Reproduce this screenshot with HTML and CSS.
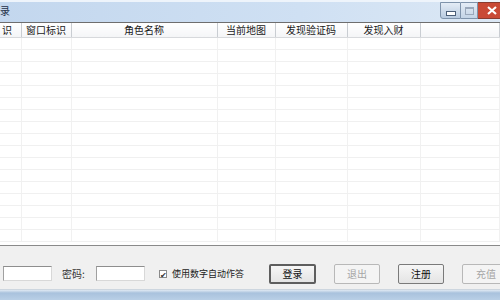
FILE: index.html
```html
<!DOCTYPE html>
<html lang="zh-CN">
<head>
    <meta charset="UTF-8">
    <title>登录</title>
    <link rel="stylesheet" href="styles.css">
</head>
<body>
    <div class="window">
        <div class="titlebar">
            <span class="title">录</span>
            <div class="caption-buttons">
                <span class="cap-btn cap-min"><i></i></span>
                <span class="cap-btn cap-max"><i></i></span>
                <span class="cap-btn cap-close">
                    <svg width="10" height="9" viewBox="0 0 10 9"><path d="M1 1 L9 8 M9 1 L1 8" stroke="#fff" stroke-width="2.2" fill="none"/></svg>
                </span>
            </div>
        </div>

        <div class="list">
            <table class="grid">
                <colgroup>
                    <col class="c-id">
                    <col class="c-win">
                    <col class="c-name">
                    <col class="c-map">
                    <col class="c-code">
                    <col class="c-money">
                    <col>
                </colgroup>
                <thead>
                    <tr>
                        <th class="th-id">识</th>
                        <th>窗口标识</th>
                        <th>角色名称</th>
                        <th>当前地图</th>
                        <th>发现验证码</th>
                        <th>发现入财</th>
                        <th></th>
                    </tr>
                </thead>
                <tbody id="rows">
                    <!-- empty rows are added below -->
                </tbody>
            </table>
        </div>

        <div class="panel">
            <input type="text" class="field">
            <label class="label">密码:</label>
            <input type="password" class="field">
            <label class="check"><span class="box">✔</span>使用数字自动作答</label>
            <button class="btn btn-default">登录</button>
            <button class="btn" disabled>退出</button>
            <button class="btn">注册</button>
            <button class="btn btn-last" disabled>充值</button>
        </div>

        <div class="frame-bottom"></div>
    </div>

    <script>
        const rows = document.getElementById('rows');
        for (let i = 0; i < 17; i++) {
            const tr = document.createElement('tr');
            tr.innerHTML = '<td></td><td></td><td></td><td></td><td></td><td></td><td></td>';
            rows.appendChild(tr);
        }
    </script>
</body>
</html>
```

FILE: styles.css
```css
body {
    margin: 0;
    padding: 0;
    font-family: "Noto Sans CJK SC", "Liberation Sans", sans-serif;
    font-size: 10px;
    color: #222;
    background-color: #fff;
}
.window {
    width: 500px;
    height: 300px;
    overflow: hidden;
    display: flex;
    flex-direction: column;
    background-color: #f0f0f0;
}
.titlebar {
    width: 500px;
    height: 22px;
    flex: none;
    display: flex;
    align-items: flex-start;
    background: linear-gradient(to right, #c3d7ee, #cfe0f3 60%, #dce8f5);
    border-top: 2px solid #eef4fb;
    box-sizing: border-box;
}
.title {
    flex: 1;
    margin-top: 3px;
    font-size: 10px;
    line-height: 12px;
    color: #1e3048;
}
.caption-buttons {
    flex: none;
    display: flex;
}
.cap-btn {
    flex: none;
    height: 17px;
    box-sizing: border-box;
    border: 1px solid #7f93ab;
    display: flex;
    align-items: center;
    justify-content: center;
}
.cap-min {
    width: 21px;
    border-radius: 0 0 0 3px;
    background: linear-gradient(#e4ecf6, #b9cbe0);
}
.cap-min i {
    width: 8px;
    height: 3px;
    margin-top: 5px;
    background: #fff;
    border: 1px solid #4b5e78;
}
.cap-max {
    width: 17px;
    border-left: none;
    background: linear-gradient(#e4ecf6, #c4d4e6);
}
.cap-max i {
    width: 7px;
    height: 5px;
    border: 1px solid #9aa8bb;
    border-top-width: 2px;
}
.cap-close {
    width: 22px;
    border-color: #8a3b2f;
    border-left: none;
    border-right: none;
    background-color: #c94a36;
    justify-content: flex-end;
    padding-right: 3px;
}
.list {
    height: 222px;
    flex: none;
    overflow: hidden;
    background-color: #fff;
    border-top: 1px solid #6e6e6e;
    border-bottom: 1px solid #8a8a8a;
}
.grid {
    width: 500px;
    table-layout: fixed;
    border-collapse: collapse;
}
.c-id { width: 21px; }
.c-win { width: 50px; }
.c-name { width: 146px; }
.c-map { width: 58px; }
.c-code { width: 72px; }
.c-money { width: 73px; }
.grid th {
    height: 14px;
    padding: 0;
    font-weight: normal;
    font-size: 10px;
    line-height: 14px;
    color: #1a1a1a;
    text-align: center;
    background: linear-gradient(#ffffff, #f4f5f7);
    border-right: 1px solid #c9cdd2;
    border-bottom: 1px solid #d7d9dc;
    white-space: nowrap;
    overflow: hidden;
}
.grid .th-id {
    text-align: left;
    padding-left: 2px;
}
.grid td {
    height: 11px;
    padding: 0;
    border-right: 1px solid #f1f1f1;
    border-bottom: 1px solid #f0f0f0;
}
.panel {
    height: 43px;
    flex: none;
    box-sizing: border-box;
    padding-top: 12px;
    padding-left: 3px;
    display: flex;
    align-items: center;
    background-color: #f0f0f0;
    white-space: nowrap;
}
.field {
    width: 49px;
    height: 15px;
    flex: none;
    box-sizing: border-box;
    margin: 0;
    padding: 0;
    background: #fff;
    border: 1px solid #d8d8d8;
    border-top-color: #8e8e8e;
    border-left-color: #a0a0a0;
}
.label {
    margin-left: 10px;
    width: 34px;
    flex: none;
    font-size: 10px;
    color: #333;
}
.check {
    margin-left: 14px;
    display: flex;
    align-items: center;
    flex: none;
    font-size: 9px;
    color: #222;
}
.box {
    width: 8px;
    height: 8px;
    margin-right: 5px;
    box-sizing: border-box;
    border: 1px solid #8a8a8a;
    background: #fff;
    font-size: 8px;
    line-height: 7px;
    text-align: center;
    color: #333;
}
.btn {
    height: 20px;
    width: 46px;
    flex: none;
    margin-left: 18px;
    padding: 0;
    box-sizing: border-box;
    font-family: "Noto Sans CJK SC", sans-serif;
    font-size: 10px;
    color: #111;
    background: linear-gradient(#f6f6f6, #e4e4e4);
    border: 1px solid #7a7a7a;
    border-radius: 2px;
}
.btn-default {
    margin-left: 25px;
    width: 47px;
    border: 2px solid #5e5e5e;
}
.btn:disabled {
    color: #a6a6a6;
    border-color: #b8b8b8;
    background: #f4f4f4;
}
.btn-last {
    width: 48px;
}
.frame-bottom {
    flex: 1;
    background: linear-gradient(#e0e9f3, #a9c2dd 30%, #b9cfe6);
    border-top: 1px solid #cdd6df;
}
```
